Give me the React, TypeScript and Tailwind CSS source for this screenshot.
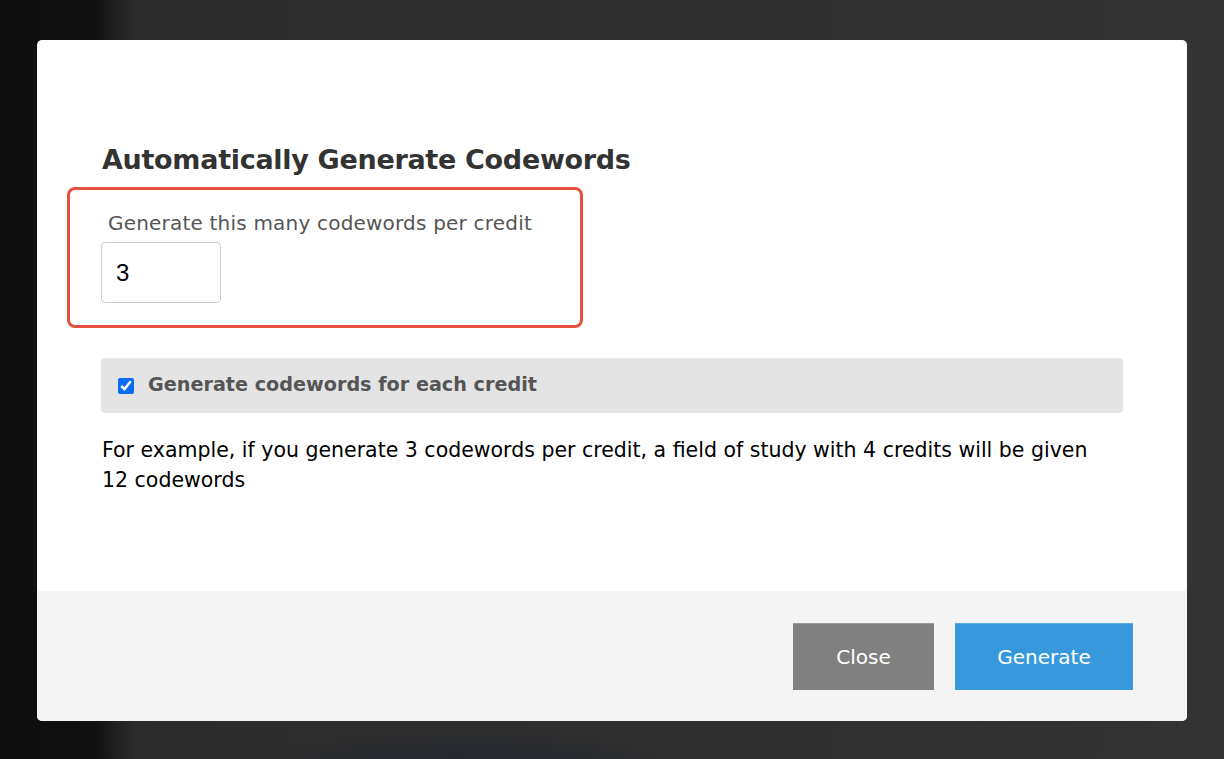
import React, { useState } from 'react';

const font = { fontFamily: '"DejaVu Sans", "Open Sans", sans-serif' };

const App: React.FC = () => {
  const [count, setCount] = useState('3');
  const [perCredit, setPerCredit] = useState(true);

  return (
    <div
      className="w-full h-[759px] overflow-hidden pt-[40px] pl-[37px] bg-[radial-gradient(ellipse_220px_45px_at_470px_775px,#1d2330_0%,rgba(29,35,48,0)_100%),linear-gradient(to_right,#0e0e0e_0px,#111111_95px,#2c2c2c_135px,#333333_100%)]"
      style={font}
    >
      <div className="w-[1150px] h-[681px] bg-white rounded-[5px] overflow-hidden flex flex-col">
        {/* body */}
        <div className="h-[551px] pt-[104px] pl-[65px] pr-[64px]">
          <h2 className="text-[27px] leading-[32px] font-bold text-[#333333] tracking-[-0.3px]">
            Automatically Generate Codewords
          </h2>

          <div className="mt-[11px] -ml-[35px] w-[516px] h-[141px] border-[3px] border-[#e4503f] rounded-[8px] pt-[22px] pl-[31px]">
            <label className="block pl-[7px] text-[20px] leading-[23px] tracking-[0.2px] text-[#555555]">
              Generate this many codewords per credit
            </label>
            <input
              type="text"
              value={count}
              onChange={(e) => setCount(e.target.value)}
              className="mt-[7px] w-[120px] h-[61px] border border-[#cccccc] rounded-[4px] px-[14px] text-[24px] text-black outline-none"
              style={{ fontFamily: '"Liberation Sans", Arial, sans-serif' }}
            />
          </div>

          <label className="mt-[30px] -ml-px h-[55px] bg-[#e4e4e4] rounded-[4px] flex items-center pl-[17px]">
            <input
              type="checkbox"
              checked={perCredit}
              onChange={(e) => setPerCredit(e.target.checked)}
              className="w-[16px] h-[16px] accent-[#0a6cf5]"
            />
            <span className="ml-[14px] text-[19.2px] font-bold text-[#555555]">
              Generate codewords for each credit
            </span>
          </label>

          <p className="mt-[22px] max-w-[1000px] text-[20.5px] leading-[30px] text-black">
            For example, if you generate 3 codewords per credit, a field of study with 4 credits will be given 12 codewords
          </p>
        </div>

        {/* footer */}
        <div className="flex-1 bg-[#f4f4f4] flex justify-end items-start pt-[32px] pr-[54px] gap-[21px]">
          <button className="w-[141px] h-[67px] bg-[#808080] border-t border-[#9a9a9a] text-white text-[20px]">
            Close
          </button>
          <button className="w-[178px] h-[67px] bg-[#3799dc] border-t border-[#5aaee6] text-white text-[20px]">
            Generate
          </button>
        </div>
      </div>
    </div>
  );
};

export default App;
